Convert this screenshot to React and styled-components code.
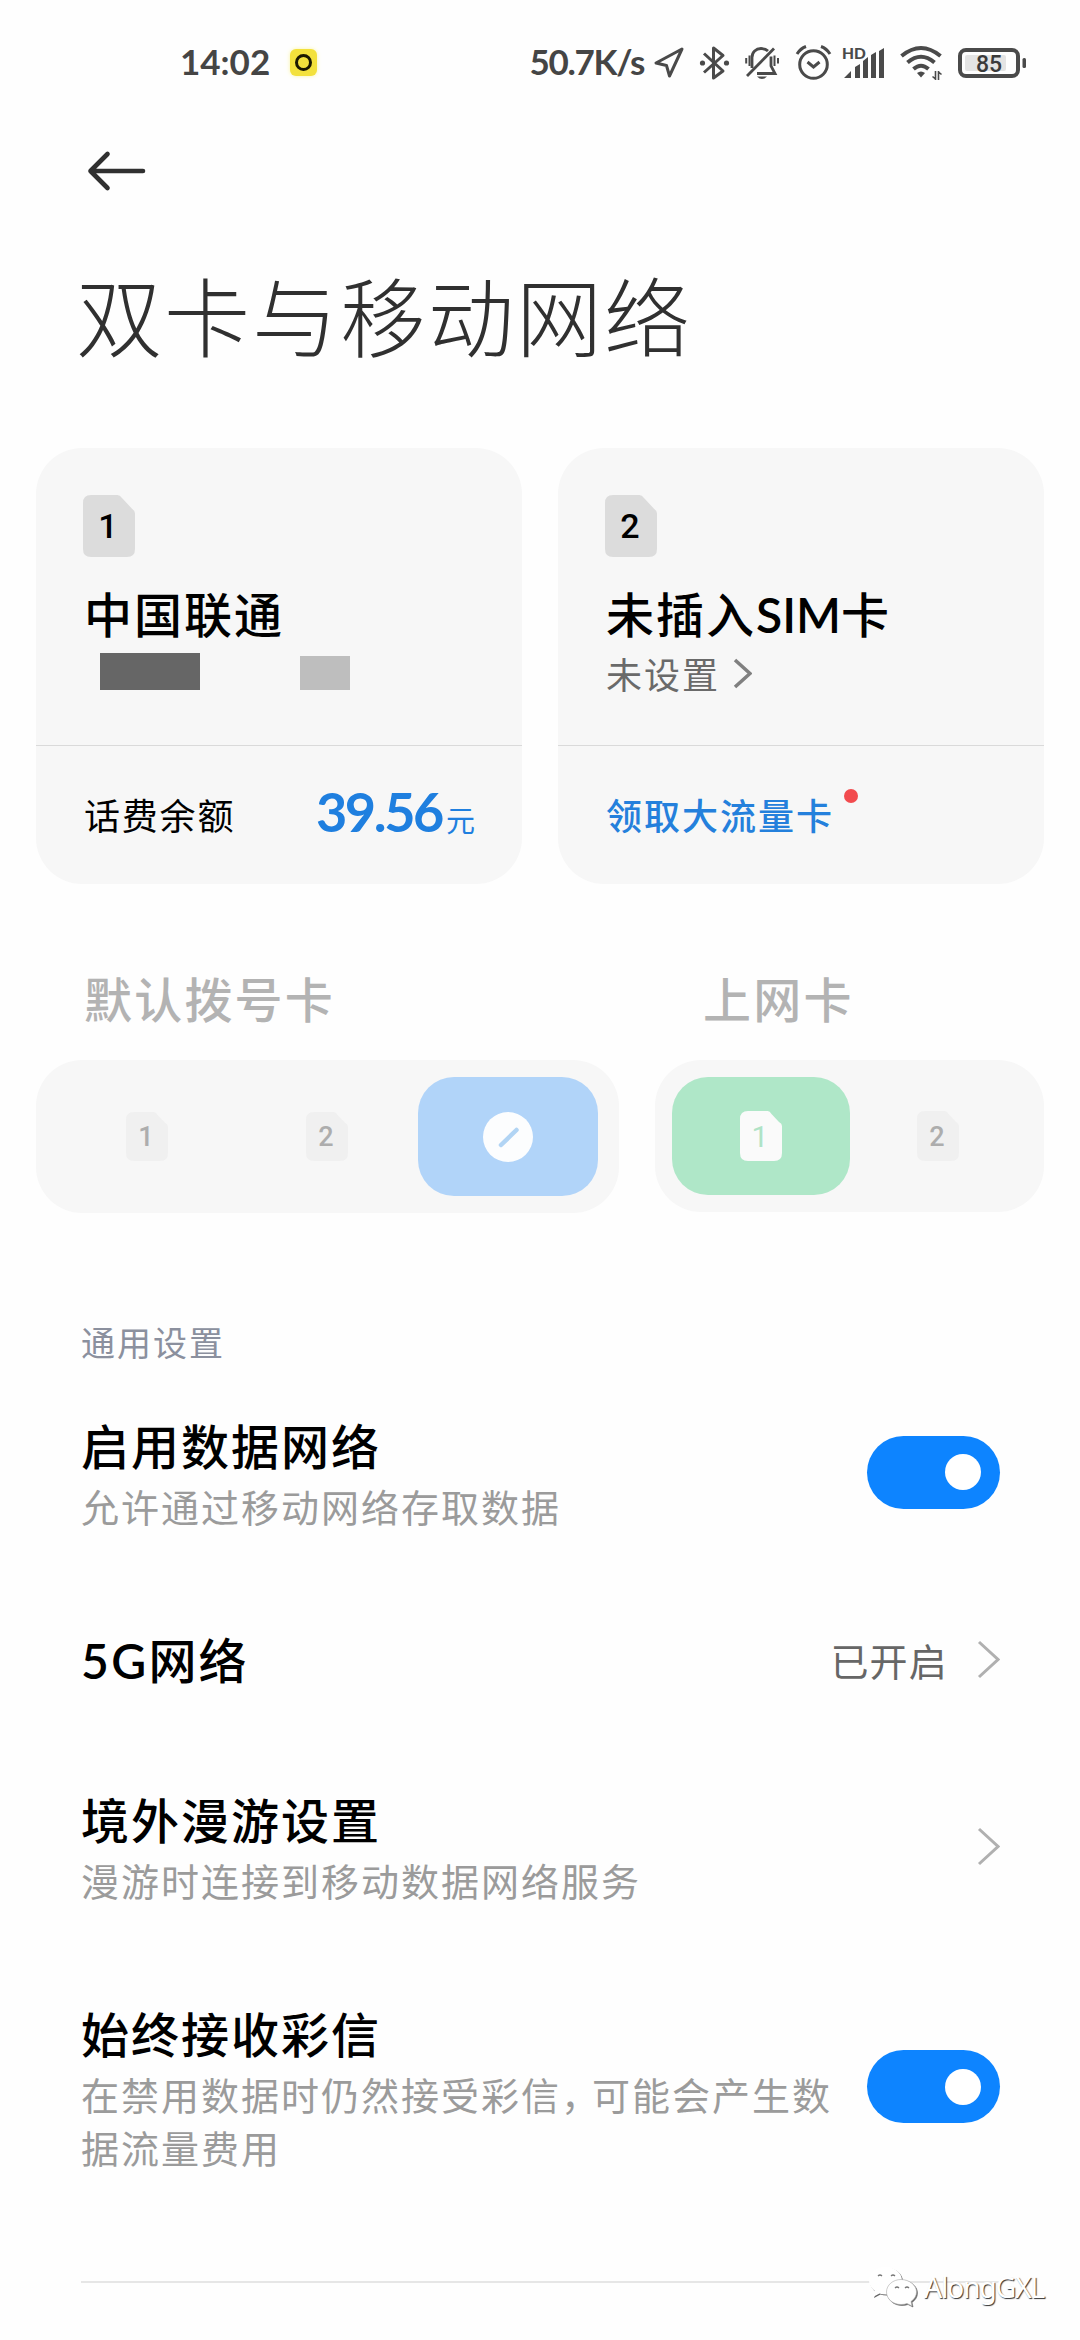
import React, { useState } from 'react'
import styled, { createGlobalStyle } from 'styled-components'

const GlobalStyle = createGlobalStyle`
  * {
    box-sizing: border-box;
  }
  body {
    margin: 0;
    background: #fefefe;
    font-family: Lato, 'Noto Sans CJK SC', sans-serif;
    color: #000;
  }
`

const Screen = styled.div`
  position: relative;
  width: 1080px;
  height: 2340px;
  overflow: hidden;
  background: #fefefe;
`

const StatusBar = styled.header`
  display: flex;
  align-items: center;
  justify-content: space-between;
  height: 125px;
  padding: 0 53px 0 180px;
  color: #454545;
`

const StatusGroup = styled.div`
  display: flex;
  align-items: center;
`

const StatusText = styled.span`
  margin-bottom: 3px;
  font-size: 35px;
  font-weight: 700;
  line-height: 40px;
  letter-spacing: ${props => props.$spacing || '0'};
`

const AppBadge = styled.span`
  display: flex;
  align-items: center;
  justify-content: center;
  width: 27px;
  height: 27px;
  margin-left: 20px;
  border-radius: 6px;
  background: #f3e13c;
  box-shadow: 0 0 4px #fbf6a8;

  &::after {
    content: '';
    box-sizing: border-box;
    width: 17px;
    height: 17px;
    border: 3px solid #1b1800;
    border-radius: 50%;
  }
`

const StatusIcon = styled.svg`
  display: block;
  flex: none;
  margin-left: ${props => props.$gap}px;
  overflow: visible;
`

const NavBar = styled.nav`
  display: flex;
  align-items: center;
  height: 91px;
  padding-left: 86px;
`

const BackButton = styled.button`
  padding: 0;
  border: none;
  background: none;

  svg {
    display: block;
  }
`

const PageTitle = styled.h1`
  margin: 0;
  padding-left: 76px;
  font-size: 86px;
  font-weight: 200;
  line-height: 204px;
  letter-spacing: 2px;
  color: #303030;
`

const Cards = styled.section`
  display: grid;
  grid-template-columns: 1fr 1fr;
  gap: 36px;
  padding: 28px 36px 0;
`

const Card = styled.article`
  height: 436px;
  border-radius: 46px;
  background: #f7f7f7;
`

const CardTop = styled.div`
  height: 298px;
  padding: 47px 47px 0;
  border-bottom: 1px solid #dadada;
`

const CarrierName = styled.h2`
  margin: 28px 0 0 1px;
  font-size: 48px;
  font-weight: 500;
  line-height: 60px;
  letter-spacing: 2px;
`

const CarrierSub = styled.div`
  display: flex;
  align-items: center;
  gap: 13px;
  height: 56px;
  padding-left: 1px;
  font-size: 36px;
  letter-spacing: 2px;
  color: #6a6a6a;
`

const RedactedNumber = styled.div`
  display: flex;
  align-items: flex-end;
  gap: 100px;
  height: 45px;
  padding-left: 17px;
`

const Redacted = styled.span`
  width: ${props => props.$width}px;
  height: ${props => props.$height}px;
  background: ${props => props.$color};
`

const CardBottom = styled.div`
  display: flex;
  align-items: center;
  justify-content: space-between;
  height: 138px;
  padding: 3px 47px 0 48px;
`

const BalanceLabel = styled.span`
  margin-bottom: 5px;
  font-size: 36px;
  letter-spacing: 1.8px;
`

const Balance = styled.span`
  font-size: 54px;
  font-weight: 700;
  line-height: 60px;
  letter-spacing: -2.4px;
  color: #1f7fdf;

  small {
    margin-left: 4px;
    font-size: 29px;
    font-weight: 400;
    letter-spacing: 0;
  }
`

const Offer = styled.a`
  position: relative;
  margin-bottom: 5px;
  font-size: 36px;
  font-weight: 500;
  letter-spacing: 2px;
  color: #2480dc;

  &::after {
    content: '';
    position: absolute;
    top: 1px;
    right: -24px;
    width: 14px;
    height: 14px;
    border-radius: 50%;
    background: #f24b4e;
  }
`

const Pickers = styled.section`
  display: flex;
  gap: 36px;
  padding: 86px 36px 0;
`

const PickerLabel = styled.h3`
  margin: 0 0 30px;
  padding-left: 48px;
  font-size: 48px;
  font-weight: 500;
  line-height: 60px;
  letter-spacing: 2.2px;
  color: #b3b3b3;
`

const Segments = styled.div`
  display: flex;
  width: ${props => props.$width}px;
  height: ${props => props.$height}px;
  padding: 17px ${props => props.$side}px;
  border-radius: 46px;
  background: #f7f7f7;
`

const Segment = styled.div`
  display: flex;
  flex: 1;
  align-items: center;
  justify-content: center;
  border-radius: 36px;
  background: ${props => props.$color || 'transparent'};
`

const Settings = styled.section`
  padding: 107px 80px 0 81px;
`

const SectionLabel = styled.h4`
  margin: 0 0 47px;
  font-size: 34px;
  font-weight: 400;
  line-height: 46px;
  letter-spacing: 2px;
  color: #8b909e;
`

const SettingRow = styled.div`
  display: flex;
  align-items: center;
  justify-content: space-between;
  margin-bottom: ${props => props.$gap}px;
`

const SettingTitle = styled.div`
  font-size: 48px;
  font-weight: 500;
  line-height: 68px;
  letter-spacing: 2px;
`

const Latin = styled.span`
  font-weight: 600;
  letter-spacing: ${props => props.$spacing || '0'};
`

const SettingNote = styled.div`
  width: 760px;
  font-size: 38px;
  line-height: 53px;
  letter-spacing: 2px;
  color: #9b9b9b;
`

// half-width comma, so the line keeps its tighter rhythm
const Comma = styled.span`
  font-feature-settings: 'halt';
  letter-spacing: 12px;
`

const SettingValue = styled.span`
  display: flex;
  align-items: center;
  gap: 29px;
  margin-bottom: 3px;
  font-size: 38px;
  letter-spacing: 1.2px;
  color: #666;
`

const Switch = styled.button`
  display: flex;
  align-items: center;
  justify-content: ${props => (props.$on ? 'flex-end' : 'flex-start')};
  flex: none;
  width: 133px;
  height: 73px;
  margin-bottom: 3px;
  padding: 0 19px;
  border: none;
  border-radius: 37px;
  background: ${props => (props.$on ? '#0d84ff' : '#e0e0e0')};

  &::after {
    content: '';
    width: 36px;
    height: 36px;
    border-radius: 50%;
    background: #fff;
  }
`

const Divider = styled.hr`
  height: 2px;
  margin: 0;
  border: none;
  background: #e6e6e6;
`

const Watermark = styled.div`
  position: absolute;
  right: 36px;
  bottom: 30px;
  display: flex;
  align-items: center;
  gap: 6px;
  font-family: 'Noto Sans', sans-serif;
  font-size: 28.5px;
  line-height: 46px;
  letter-spacing: -1.3px;
  color: #fff;
  text-shadow: 1px 1px 1px #333;

  svg {
    display: block;
    filter: drop-shadow(1px 1px 0.6px #666);
  }
`

const Sim = styled.svg`
  display: block;
`

const SimIcon = ({ number, width, height, fill, color, fontSize, weight = 500 }) => (
  <Sim width={width} height={height} viewBox={`0 0 ${width} ${height}`}>
    <path
      d={`M8 0H${width * 0.66}Q${width * 0.71} 0 ${width * 0.75} 3L${width - 3} ${height * 0.22}Q${width} ${height * 0.25} ${width} ${height * 0.3}V${height - 8}Q${width} ${height} ${width - 8} ${height}H8Q0 ${height} 0 ${height - 8}V8Q0 0 8 0Z`}
      fill={fill}
    />
    <text
      x={width / 2 - 1}
      y={height / 2 + fontSize * 0.355}
      textAnchor="middle"
      fontFamily="Roboto"
      fontSize={fontSize}
      fontWeight={weight}
      fill={color}
    >
      {number}
    </text>
  </Sim>
)

const Chevron = ({ width, height, color, stroke }) => (
  <svg width={width} height={height} viewBox={`0 0 ${width} ${height}`}>
    <path
      d={`M2 2L${width - 2} ${height / 2}L2 ${height - 2}`}
      fill="none"
      stroke={color}
      strokeWidth={stroke}
    />
  </svg>
)

const StatusIcons = () => (
  <>
    <StatusIcon $gap={10} width="30" height="31" viewBox="0 0 30 31" fill="none" stroke="#4a4a4a" strokeWidth="3" strokeLinejoin="round">
      <path d="M28 2L2 16L12.500 18.500L15.500 29Z" />
    </StatusIcon>
    <StatusIcon $gap={16} width="29" height="34" viewBox="0 0 29 34" fill="none" stroke="#4a4a4a" strokeWidth="3">
      <path d="M4 7.500L23 25L13.500 32V2L23 9.500L4 26.500" strokeLinejoin="round" />
      <circle cx="2.500" cy="17" r="2.600" fill="#4a4a4a" stroke="none" />
      <circle cx="26.500" cy="17" r="2.600" fill="#4a4a4a" stroke="none" />
    </StatusIcon>
    <StatusIcon $gap={16} width="34" height="34" viewBox="0 0 34 34" fill="none" stroke="#4a4a4a" strokeWidth="2.800">
      <path d="M7 22V11.500C7 6 11 2.500 16 2.500C19 2.500 21.500 3.500 23 5" />
      <path d="M26 10.500V20L30 27.500H12" />
      <path d="M2 30L29 2.500" />
      <path d="M4.500 9.500V20M1.200 12V17.500M29.500 9.500V20M33 12V17.500" strokeWidth="2" />
      <path d="M12 30.500H22Q17 35.500 12 30.500Z" fill="#4a4a4a" stroke="none" />
    </StatusIcon>
    <StatusIcon $gap={17} width="35" height="35" viewBox="0 0 35 35" fill="none" stroke="#4a4a4a" strokeWidth="3">
      <circle cx="17.500" cy="19.500" r="13.800" />
      <path d="M11.500 17L17.500 22L23.500 17" />
      <path d="M1 9Q4.500 3.500 10 1.500M34 9Q30.500 3.500 25 1.500" />
    </StatusIcon>
    <StatusIcon $gap={12} width="41" height="34" viewBox="0 0 41 34" fill="#4a4a4a">
      <text x="-1" y="13" fontFamily="Lato" fontSize="15.500" fontWeight="900">HD</text>
      <path d="M1 32L8 25V32ZM12 21L17 18V32H12ZM20 15L25 11V32H20ZM28 9L33 6V32H28ZM36 5L41 2V32H36Z" />
    </StatusIcon>
    <StatusIcon $gap={16} width="42" height="34" viewBox="0 0 42 34" fill="none" stroke="#4a4a4a" strokeWidth="4">
      <path d="M1.500 10Q21 -6 40.500 10" />
      <path d="M7.500 16.500Q21 5 34.500 16.500" />
      <path d="M13.500 23Q21 16.500 28.500 23" />
      <path d="M17 27Q21 24 25 27L21 31.500Z" fill="#4a4a4a" stroke="none" />
      <path d="M35.500 25V34M32.500 30.500L35.500 33M38.500 34V25M41.500 28.500L38.500 26" strokeWidth="1.600" />
    </StatusIcon>
    <StatusIcon $gap={16} width="69" height="30" viewBox="0 0 69 30" fill="none">
      <rect x="2" y="2" width="58" height="26" rx="6" stroke="#4a4a4a" strokeWidth="4" />
      <rect x="7" y="7" width="41" height="16" rx="2" fill="#e4e4e4" />
      <rect x="64.500" y="10" width="3.500" height="10" rx="1.500" fill="#4a4a4a" />
      <text x="31" y="23.500" textAnchor="middle" fontFamily="Roboto" fontSize="23" fontWeight="500" fill="#3a3a3a">85</text>
    </StatusIcon>
  </>
)

const WechatIcon = () => (
  <svg width="50" height="42" viewBox="0 0 50 42" fill="#fff">
    <path d="M17.500 1C8 1 1 7 1 14.500C1 19 3.500 22.500 7 25L5 31L11.500 27.500Q14 28.500 18 28.500Q32 27 34 14.500C34 7 27 1 17.500 1Z" />
    <path d="M33 13.500C25 13.500 18.500 19 18.500 26C18.500 33 25 38.500 33 38.500Q36.500 38.500 39 37.500L44 40L43 35.500C46.500 33 48.500 30 48.500 26C48.500 19 41 13.500 33 13.500Z" stroke="#aaa" strokeWidth="0.600" />
    <path d="M10 10Q12 8 14 10M23 10Q25 8 27 10M27 22Q29 20 31 22M37 22Q39 20 41 22" fill="none" stroke="#777" strokeWidth="1.200" />
  </svg>
)

const App = () => {
  const [dataOn, setDataOn] = useState(true)
  const [mmsOn, setMmsOn] = useState(true)

  return (
    <Screen>
      <GlobalStyle />
      <StatusBar>
        <StatusGroup>
          <StatusText>14:02</StatusText>
          <AppBadge />
        </StatusGroup>
        <StatusGroup>
          <StatusText $spacing="-1.3px">50.7K/s</StatusText>
          <StatusIcons />
        </StatusGroup>
      </StatusBar>
      <NavBar>
        <BackButton aria-label="返回">
          <svg width="60" height="42" viewBox="0 0 60 42" fill="none" stroke="#303030" strokeWidth="4.600" strokeLinecap="round" strokeLinejoin="round">
            <path d="M57 21H4.500M21.500 4L4.500 21L21.500 38" />
          </svg>
        </BackButton>
      </NavBar>
      <PageTitle>双卡与移动网络</PageTitle>

      <Cards>
        <Card>
          <CardTop>
            <SimIcon number="1" width={52} height={62} fill="#dcdcdc" color="#000" fontSize={34} />
            <CarrierName>中国联通</CarrierName>
            <RedactedNumber>
              <Redacted $width={100} $height={37} $color="#666" />
              <Redacted $width={50} $height={34} $color="#bebebe" />
            </RedactedNumber>
          </CardTop>
          <CardBottom>
            <BalanceLabel>话费余额</BalanceLabel>
            <Balance>39.56<small>元</small></Balance>
          </CardBottom>
        </Card>
        <Card>
          <CardTop>
            <SimIcon number="2" width={52} height={62} fill="#dcdcdc" color="#000" fontSize={34} />
            <CarrierName>未插入<Latin>SIM</Latin>卡</CarrierName>
            <CarrierSub>
              未设置
              <Chevron width={19} height={31} color="#808080" stroke={3.6} />
            </CarrierSub>
          </CardTop>
          <CardBottom>
            <Offer>领取大流量卡</Offer>
          </CardBottom>
        </Card>
      </Cards>

      <Pickers>
        <div>
          <PickerLabel>默认拨号卡</PickerLabel>
          <Segments $width={583} $height={153} $side={21}>
            <Segment>
              <SimIcon number="1" width={42} height={49} fill="#f0f0f0" color="#adadad" fontSize={27} />
            </Segment>
            <Segment>
              <SimIcon number="2" width={42} height={49} fill="#f0f0f0" color="#adadad" fontSize={27} />
            </Segment>
            <Segment $color="#b1d4f9">
              <svg width="50" height="50" viewBox="0 0 50 50">
                <circle cx="25" cy="25" r="25" fill="#fcfdfe" />
                <path d="M18 33L33.500 18" stroke="#b1d4f4" strokeWidth="4.500" strokeLinecap="round" />
              </svg>
            </Segment>
          </Segments>
        </div>
        <div>
          <PickerLabel>上网卡</PickerLabel>
          <Segments $width={389} $height={152} $side={17}>
            <Segment $color="#afe7c8">
              <SimIcon number="1" width={42} height={50} fill="#fafafa" color="#afe3c6" fontSize={30} weight={400} />
            </Segment>
            <Segment>
              <SimIcon number="2" width={42} height={50} fill="#f0f0f0" color="#adadad" fontSize={27} />
            </Segment>
          </Segments>
        </div>
      </Pickers>

      <Settings>
        <SectionLabel>通用设置</SectionLabel>
        <SettingRow $gap={93}>
          <div>
            <SettingTitle>启用数据网络</SettingTitle>
            <SettingNote>允许通过移动网络存取数据</SettingNote>
          </div>
          <Switch $on={dataOn} onClick={() => setDataOn(!dataOn)} />
        </SettingRow>
        <SettingRow $gap={92}>
          <SettingTitle><Latin $spacing="2.4px">5G</Latin>网络</SettingTitle>
          <SettingValue>
            已开启
            <Chevron width={23} height={39} color="#b0b0b0" stroke={3} />
          </SettingValue>
        </SettingRow>
        <SettingRow $gap={93}>
          <div>
            <SettingTitle>境外漫游设置</SettingTitle>
            <SettingNote>漫游时连接到移动数据网络服务</SettingNote>
          </div>
          <SettingValue>
            <Chevron width={23} height={39} color="#b0b0b0" stroke={3} />
          </SettingValue>
        </SettingRow>
        <SettingRow $gap={106}>
          <div>
            <SettingTitle>始终接收彩信</SettingTitle>
            <SettingNote>
              在禁用数据时仍然接受彩信<Comma>，</Comma>可能会产生数据流量费用
            </SettingNote>
          </div>
          <Switch $on={mmsOn} onClick={() => setMmsOn(!mmsOn)} />
        </SettingRow>
        <Divider />
      </Settings>

      <Watermark>
        <WechatIcon />
        AlongGXL
      </Watermark>
    </Screen>
  )
}

export default App
